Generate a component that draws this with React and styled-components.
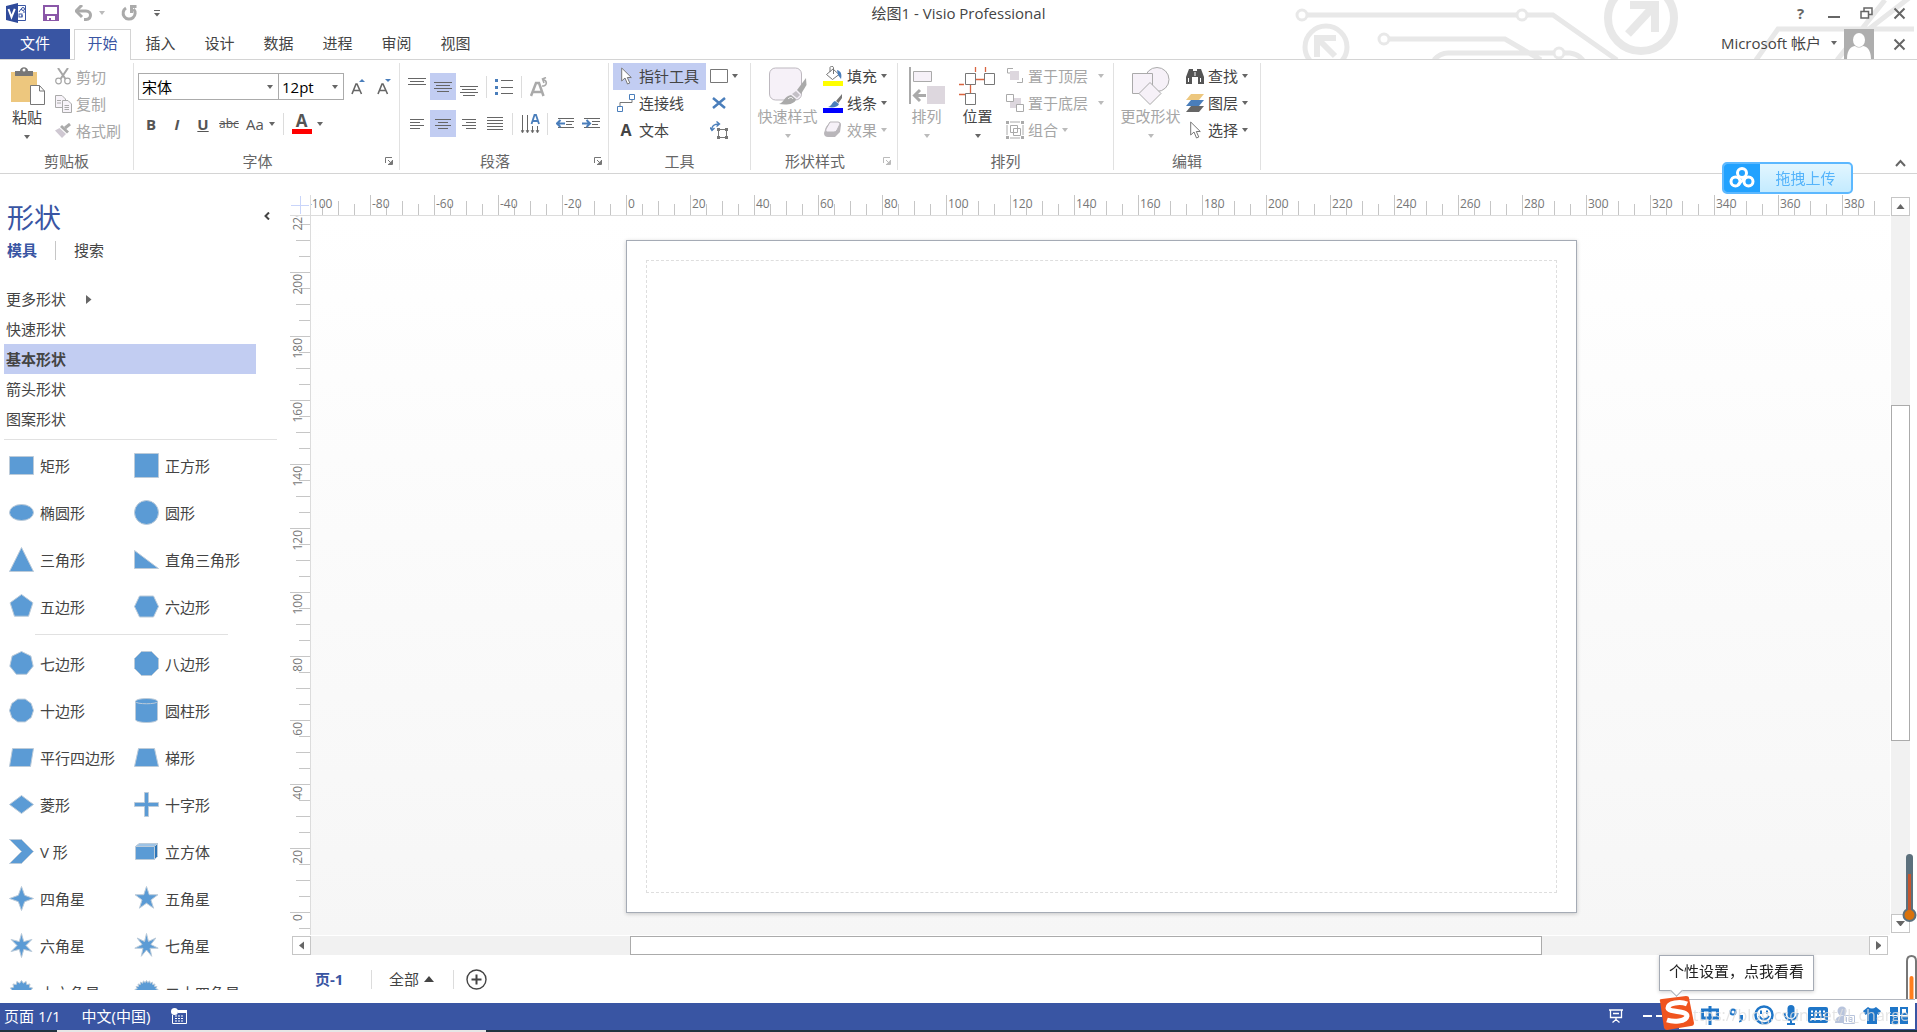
import React from 'react';
import styled, { createGlobalStyle } from 'styled-components';

const GlobalStyle = createGlobalStyle`
  * {
    box-sizing: border-box;
  }
  body {
    margin: 0;
    background: #fff;
    overflow: hidden;
  }
  body, button, select {
    font-family: "Open Sans", "Noto Sans CJK SC", sans-serif;
    font-size: 15px;
    line-height: 20px;
    color: #444;
  }
  button {
    border: none;
    background: none;
    padding: 0;
    white-space: nowrap;
  }
  svg {
    display: block;
    flex: none;
  }
`;

const Window = styled.div`
  display: flex;
  flex-direction: column;
  height: 100vh;
  overflow: hidden;
`;

/* ---------- title bar + tabs ---------- */

const Header = styled.header`
  position: relative;
  border-bottom: 1px solid #d4d4d4;
`;

const Circuit = styled.svg`
  position: absolute;
  right: 0;
  top: 0;
`;

const TitleBar = styled.div`
  position: relative;
  display: grid;
  grid-template-columns: 1fr auto 1fr;
  align-items: center;
  height: 29px;
  padding-bottom: 3px;
`;

const QuickAccess = styled.div`
  display: flex;
  align-items: center;
  gap: 16px;
  padding-left: 6px;
`;

const QuickButton = styled.button`
  display: flex;
  align-items: center;
  gap: 6px;
`;

const Title = styled.span`
  font-size: 15px;
`;

const WindowButtons = styled.div`
  display: flex;
  justify-content: flex-end;
  padding-right: 1px;
`;

const WindowButton = styled.button`
  display: flex;
  align-items: center;
  justify-content: center;
  width: 33px;
  height: 26px;
  font-weight: bold;
  color: #666;
`;

const TabRow = styled.div`
  position: relative;
  display: flex;
  height: 30px;
`;

const FileTab = styled.button`
  width: 70px;
  margin-right: 4px;
  padding-bottom: 2px;
  background: #3955a3;
  color: #fff;
`;

const Tab = styled.button`
  width: ${(p) => (p.$active ? 57 : 59)}px;
  height: ${(p) => (p.$active ? 31 : 30)}px;
  padding-bottom: ${(p) => (p.$active ? 4 : 2)}px;
  color: ${(p) => (p.$active ? '#3955a3' : '#444')};
  background: ${(p) => (p.$active ? '#fff' : 'none')};
  border: ${(p) => (p.$active ? '1px solid #d4d4d4' : 'none')};
  border-bottom: none;
`;

const Account = styled.div`
  display: flex;
  align-items: center;
  margin-left: auto;
  padding-right: 1px;
`;

const AccountName = styled.button`
  display: flex;
  align-items: center;
  gap: 10px;
  margin-right: 7px;
  padding-bottom: 2px;
`;

const AvatarButton = styled.button`
  margin-right: 9px;
`;

/* ---------- ribbon ---------- */

const Ribbon = styled.div`
  display: flex;
  height: 114px;
  padding: 3px 0;
  border-bottom: 1px solid #d4d4d4;
`;

const GroupBox = styled.section`
  display: flex;
  flex-direction: column;
  flex: none;
  width: ${(p) => p.$w}px;
  border-right: 1px solid #e1e1e1;
`;

const GroupBody = styled.div`
  display: flex;
  flex: 1;
  padding-left: ${(p) => p.$pad || 0}px;
`;

const GroupFooter = styled.div`
  display: flex;
  align-items: center;
  height: 18px;
  color: #666;

  span {
    flex: 1;
    text-align: center;
  }
  button {
    width: 18px;
    padding-left: 4px;
  }
`;

const Column = styled.div`
  display: flex;
  flex-direction: column;
  flex: none;
  padding-top: ${(p) => p.$top || 0}px;
`;

const Row = styled.div`
  display: flex;
  align-items: center;
  height: 37px;
`;

const BigButton = styled.button`
  display: flex;
  flex-direction: column;
  align-items: center;
  width: ${(p) => p.$w}px;
  padding-top: 4px;
  color: ${(p) => (p.disabled ? '#a6a6a6' : '#444')};

  span {
    line-height: 23px;
    margin-bottom: 6px;
  }
`;

const SmallButton = styled.button`
  display: flex;
  align-items: center;
  height: 27px;
  gap: 4px;
  padding: 0 ${(p) => p.$pad || 0}px 2px;
  color: ${(p) => (p.disabled ? '#a6a6a6' : '#444')};
  background: ${(p) => (p.$active ? '#c2cdf2' : 'none')};

  .slot {
    display: flex;
    justify-content: center;
    width: 18px;
  }
  .wide {
    margin-left: 6px;
  }
`;

const PointerTool = styled(SmallButton)`
  width: 93px;
`;

const ToolButton = styled.button`
  display: flex;
  align-items: center;
  justify-content: center;
  gap: 5px;
  width: ${(p) => p.$w || 26}px;
  height: 27px;
  background: ${(p) => (p.$active ? '#c2cdf2' : 'none')};
  color: #555;
`;

const Divider = styled.i`
  width: 1px;
  height: 22px;
  margin: 0 4px;
  background: #dcdcdc;
`;

const Combo = styled.label`
  display: flex;
  align-items: center;
  width: ${(p) => p.$w}px;
  height: 27px;
  margin-right: -1px;
  padding-right: 5px;
  border: 1px solid #ababab;

  & + button {
    margin-left: 2px;
  }
  select {
    flex: 1;
    min-width: 0;
    appearance: none;
    border: none;
    background: none;
    padding: 0 0 0 3px;
    color: #000;
  }
`;

const Letter = styled.span`
  font-weight: ${(p) => (p.$bold ? 'bold' : 'normal')};
  font-style: ${(p) => (p.$italic ? 'italic' : 'normal')};
  text-decoration: ${(p) => p.$line || 'none'};
  font-size: ${(p) => p.$size || 15}px;
`;

const FontColor = styled.span`
  display: flex;
  justify-content: center;
  width: 20px;
  border-bottom: 5px solid #f00;
  font-size: 17px;
  font-weight: bold;
  line-height: 16px;
`;

const CollapseRibbon = styled.button`
  align-self: flex-end;
  margin-left: auto;
  padding-right: 11px;
  padding-bottom: 3px;
`;

/* ---------- shapes panel ---------- */

const Main = styled.main`
  display: flex;
  flex: 1;
  min-height: 0;
`;

const Sidebar = styled.aside`
  display: flex;
  flex-direction: column;
  flex: none;
  width: 284px;
  padding-left: 4px;
  margin-bottom: 13px;
  overflow: hidden;
`;

const SidebarHead = styled.div`
  display: flex;
  flex: none;
  justify-content: space-between;
  align-items: center;
  height: 36px;
  margin-top: 26px;
  padding-right: 14px;

  h1 {
    margin: 0 0 0 3px;
    font-size: 27px;
    font-weight: normal;
    line-height: 36px;
    color: #3955a3;
  }
  button {
    margin-bottom: 4px;
  }
`;

const SidebarTabs = styled.div`
  display: flex;
  flex: none;
  align-items: center;
  height: 28px;
  padding-left: 3px;

  button:first-child {
    font-weight: bold;
    color: #3955a3;
  }
  i {
    width: 1px;
    height: 19px;
    margin: 0 18px;
    background: #c6c6c6;
  }
`;

const StencilList = styled.nav`
  display: flex;
  flex-direction: column;
  flex: none;
  margin-top: 20px;
  margin-right: 7px;
  padding-bottom: 5px;
  border-bottom: 1px solid #e1e1e1;
`;

const Stencil = styled.button`
  display: flex;
  align-items: center;
  gap: 20px;
  width: 252px;
  height: 30px;
  padding-left: 2px;
  font-weight: ${(p) => (p.$active ? 'bold' : 'normal')};
  background: ${(p) => (p.$active ? '#c2cdf2' : 'none')};
`;

const ShapeGrid = styled.div`
  display: grid;
  grid-template-columns: 125px 1fr;
  grid-auto-rows: 47px;
  flex: none;
  padding-left: 5px;

  nav + & {
    margin-top: 2px;
  }
`;

const ShapeItem = styled.button`
  display: flex;
  align-items: center;
  gap: 6px;
`;

const ShapeRule = styled.hr`
  flex: none;
  width: 193px;
  height: 1px;
  margin: 4px 0 5px 31px;
  border: none;
  background: #e1e1e1;
`;

/* ---------- drawing area ---------- */

const WorkArea = styled.div`
  display: grid;
  grid-template-columns: 27px minmax(0, 1fr) 27px;
  grid-template-rows: 21px minmax(0, 1fr) 20px 48px;
  flex: 1;
  min-width: 0;
  padding-top: 21px;
`;

const Corner = styled.div`
  display: flex;
  justify-content: flex-end;
  margin-left: 6px;
  border-right: 1px solid #dcdcdc;
  border-bottom: 1px solid #dcdcdc;
`;

const RulerH = styled.div`
  display: flex;
  overflow: hidden;
  border-bottom: 1px solid #dcdcdc;
`;

const RulerV = styled.div`
  display: flex;
  flex-direction: column;
  overflow: hidden;
  border-right: 1px solid #dcdcdc;
`;

const CellH = styled.div`
  position: relative;
  display: flex;
  align-items: flex-end;
  flex: none;
  width: 64px;

  &:first-child {
    margin-left: -5px;
  }
  i {
    width: 16px;
    height: 11px;
    border-left: 1px solid #c6c6c6;
  }
  i:nth-child(1) {
    height: 20px;
  }
  i:nth-child(3) {
    height: 14px;
  }
  span {
    position: absolute;
    left: 2px;
    top: 1px;
    font-size: 12px;
    line-height: 16px;
    color: #777;
  }
`;

const CellV = styled.div`
  position: relative;
  display: flex;
  flex-direction: column;
  align-items: flex-end;
  flex: none;
  height: 64px;

  &:first-child {
    margin-top: -8px;
  }
  i {
    height: 16px;
    width: 11px;
    border-top: 1px solid #c6c6c6;
  }
  i:nth-child(1) {
    width: 20px;
  }
  i:nth-child(3) {
    width: 14px;
  }
  span {
    position: absolute;
    left: 6px;
    top: 2px;
    writing-mode: vertical-rl;
    transform: rotate(180deg);
    font-size: 12px;
    line-height: 16px;
    color: #777;
  }
`;

const Canvas = styled.div`
  display: flex;
  align-items: center;
  justify-content: center;
  overflow: hidden;
  padding-top: 2px;
  padding-left: 1px;
  background: linear-gradient(#fff, #f6f6f6);
`;

const Sheet = styled.div`
  flex: none;
  width: 951px;
  height: 673px;
  padding: 19px;
  background: #fff;
  border: 1px solid #a5abb5;
  box-shadow: 0 1px 4px rgba(0, 0, 0, 0.2);

  div {
    height: 100%;
    border: 1px dashed #dedede;
  }
`;

const ScrollV = styled.div`
  grid-column: 3;
  grid-row: 1 / 3;
  display: flex;
  flex-direction: column;
  margin: 2px 7px 2px 1px;
  background: #f1f1f1;
`;

const ScrollH = styled.div`
  grid-column: 1 / 3;
  display: flex;
  margin: 1px 2px 0 8px;
  background: #f1f1f1;
`;

const ScrollButton = styled.button`
  display: flex;
  align-items: center;
  justify-content: center;
  flex: none;
  width: 19px;
  height: 19px;
  background: #fff;
  border: 1px solid #c6c6c6;
`;

const Gap = styled.div`
  flex: ${(p) => p.$n} 1 0;
`;

const Thumb = styled.div`
  flex: ${(p) => p.$n} 1 0;
  background: #fff;
  border: 1px solid #ababab;
`;

const PageTabs = styled.div`
  grid-column: 1 / 4;
  display: flex;
  align-items: center;
  padding-left: 31px;

  i {
    width: 1px;
    height: 19px;
    background: #dcdcdc;
  }
`;

const PageTab = styled.button`
  width: 56px;
  text-align: left;
  font-weight: bold;
  color: #3955a3;
`;

const AllPages = styled.button`
  display: flex;
  align-items: center;
  gap: 5px;
  padding: 0 19px 0 17px;
`;

const AddPage = styled.button`
  margin-left: 12px;
`;

/* ---------- bottom ---------- */

const StatusBar = styled.footer`
  display: flex;
  align-items: center;
  flex: none;
  height: 27px;
  padding: 0 255px 2px 4px;
  gap: 21px;
  background: #3955a3;
  color: #fff;
`;

const StatusRight = styled.div`
  display: flex;
  align-items: center;
  gap: 20px;
  margin-left: auto;
`;

const Taskbar = styled.div`
  display: flex;
  flex: none;
  height: 2px;
  background: #20333f;

  div {
    width: 429px;
    margin-left: 57px;
    background: #e6e6e6;
  }
`;

/* ---------- floating desktop widgets ---------- */

const UploadButton = styled.button`
  position: fixed;
  right: 64px;
  top: 162px;
  display: flex;
  width: 131px;
  height: 32px;
  border: 2px solid #5cb8ff;
  border-radius: 5px;
  overflow: hidden;
  background: linear-gradient(#e2f6ff, #c4ebff);
  color: #55b4fb;

  .mark {
    display: flex;
    align-items: center;
    justify-content: center;
    width: 36px;
    height: 28px;
    background: #22a2ff;
  }
  .text {
    flex: 1;
    line-height: 28px;
  }
`;

const Thermometers = styled.svg`
  position: fixed;
  right: 0;
  bottom: 33px;
`;

const Tip = styled.div`
  position: fixed;
  right: 103px;
  bottom: 41px;
  width: 155px;
  height: 36px;
  border: 1px solid #a5abb5;
  background: #fff;
  box-shadow: 0 1px 4px rgba(0, 0, 0, 0.2);
  text-align: center;
  line-height: 31px;
  color: #222;

  &::after {
    content: '';
    position: absolute;
    left: 12px;
    bottom: -5px;
    width: 8px;
    height: 8px;
    background: #fff;
    border: solid #a5abb5;
    border-width: 0 1px 1px 0;
    transform: rotate(45deg);
  }
`;

const ImeBar = styled.div`
  position: fixed;
  right: 2px;
  bottom: 3px;
  display: flex;
  align-items: center;
  gap: 7px;
  width: 236px;
  height: 30px;
  padding-left: 21px;
  background: #fff;
  border-top: 1px solid #b4b8c0;

  button {
    display: flex;
    align-items: center;
    justify-content: center;
    width: 20px;
    height: 28px;
  }
`;

const SogouLogo = styled.svg`
  position: fixed;
  right: 222px;
  bottom: 2px;
`;

const Watermark = styled.span`
  position: fixed;
  right: 8px;
  bottom: 5px;
  font-size: 16px;
  line-height: 24px;
  color: rgba(222, 222, 222, 0.8);
`;

/* ---------- icons ---------- */

const Caret = ({ color = '#666', dir = 'down', size = 6 }) => {
  const h = size / 2 + 1;
  const d = {
    down: `M0 0H${size}L${size / 2} ${h}Z`,
    up: `M0 ${h}H${size}L${size / 2} 0Z`,
    left: `M${h} 0V${size}L0 ${size / 2}Z`,
    right: `M0 0V${size}L${h} ${size / 2}Z`,
  }[dir];
  const flat = dir === 'down' || dir === 'up';
  return (
    <svg width={flat ? size : h} height={flat ? h : size}>
      <path d={d} fill={color} />
    </svg>
  );
};

const Svg = ({ w, h = w, children, ...rest }) => (
  <svg width={w} height={h} viewBox={`0 0 ${w} ${h}`} fill="none" {...rest}>
    {children}
  </svg>
);

const Cross = () => (
  <Svg w={13}>
    <path d="M1.5 1.5L11.5 11.5M11.5 1.5L1.5 11.5" stroke="#666" strokeWidth="2" />
  </Svg>
);

const VisioIcon = () => (
  <Svg w={21} h={20}>
    <path d="M12 2.5H19.5V17.5H12" fill="#fff" stroke="#3955a3" />
    <path d="M13 9L15 6H16M18 8V10M15 13H17" stroke="#3955a3" />
    <circle cx="17" cy="6" r="1.5" stroke="#3955a3" />
    <rect x="13" y="11" width="3" height="3" stroke="#3955a3" />
    <path d="M0 3L12 0V20L0 17Z" fill="#2f4b9b" />
    <path d="M2.5 6L5.5 14L8.8 5.8" stroke="#fff" strokeWidth="2" />
  </Svg>
);

const SaveIcon = () => (
  <Svg w={16}>
    <path d="M0 0H16V16H0Z" fill="#8a57a8" />
    <path d="M2 2H14V9H2ZM4 11H12V15H8V13H6V15H4Z" fill="#fff" />
  </Svg>
);

const UndoIcon = () => (
  <Svg w={18} h={16}>
    <path d="M2 6H11C17 6 17 14 11 14.500H9" stroke="#aaa" strokeWidth="3" />
    <path d="M7 0L1 6L7 12" stroke="#aaa" strokeWidth="3" />
  </Svg>
);

const RedoIcon = () => (
  <Svg w={17} h={16}>
    <path d="M5 3A6 6 0 1 0 12.500 4" stroke="#aaa" strokeWidth="3" />
    <path d="M9 1.500H15.500M10.500 1V8" stroke="#aaa" strokeWidth="3" />
  </Svg>
);

const CustomizeIcon = () => (
  <Svg w={6} h={7}>
    <path d="M0 .5H6" stroke="#666" />
    <path d="M0 3H6L3 6.500Z" fill="#666" />
  </Svg>
);

const PasteIcon = () => (
  <Svg w={35} h={39}>
    <path d="M1 5H27V35H1Z" fill="#edc77e" />
    <path d="M5 4H10C10 -1 18 -1 18 4H23V9H5Z" fill="#777" />
    <circle cx="14" cy="3" r="1.500" fill="#fff" />
    <path d="M20.500 18.500H29.500L34.500 24V37.500H20.500Z" fill="#fff" stroke="#777" />
    <path d="M29.500 18.500V24H34.500" stroke="#777" />
  </Svg>
);

const CutIcon = () => (
  <Svg w={16} h={17}>
    <path d="M3 0L10.500 11M13 0L5.500 11" stroke="#a6a6a6" strokeWidth="2" />
    <circle cx="3.500" cy="13" r="2.800" stroke="#a6a6a6" strokeWidth="1.200" />
    <circle cx="12.500" cy="13" r="2.800" stroke="#a6a6a6" strokeWidth="1.200" />
  </Svg>
);

const CopyIcon = () => (
  <Svg w={17} h={18}>
    <path d="M.5 .5H7L10.500 4V12.500H.5Z" fill="#f7f3f9" stroke="#aaa" />
    <path d="M2 5.500H6M2 8H6" stroke="#aaa" />
    <path d="M7.500 5.500H13L16.500 9V17.500H7.500Z" fill="#f7f3f9" stroke="#aaa" />
    <path d="M9.500 10.500H14M9.500 12.500H14M9.500 14.500H14" stroke="#aaa" />
  </Svg>
);

const BrushIcon = () => (
  <Svg w={17} h={16}>
    <path d="M15 1L10 5" stroke="#aaa" strokeWidth="3" />
    <path d="M7 2L14 8.500L12 10.500L5 4Z" fill="#aaa" />
    <path d="M4.500 5L11 11L7 15L0 7.500Z" fill="#cfc8d2" />
  </Svg>
);

const LauncherIcon = ({ color = '#777' }) => (
  <Svg w={8}>
    <path d="M.5 6V.5H7M3 3L6 6M7.500 3V7.500H3" stroke={color} />
    <path d="M7 3.500V7H3.500Z" fill={color} />
  </Svg>
);

// horizontal strokes: list of [x1, x2, y]
const Lines = ({ w = 18, h = 14, rows }) => (
  <Svg w={w} h={h}>
    {rows.map(([a, b, y], i) => (
      <path key={i} d={`M${a} ${y + 0.5}H${b}`} stroke="#666" />
    ))}
  </Svg>
);

const BulletsIcon = () => (
  <Svg w={18} h={16}>
    <path d="M6 1.500H18M6 8.500H18M6 14.500H18" stroke="#666" />
    <path d="M0 0H3V3H0ZM0 7H3V10H0ZM0 13H3V16H0Z" fill="#4a7ebb" />
  </Svg>
);

const RotateTextIcon = () => (
  <Svg w={18} h={20}>
    <path d="M1 19L6 6H9L13.500 19M3 15H12" stroke="#aaa" strokeWidth="2.500" />
    <path d="M12 9C17 9 18 4 13 2.500M16 .5L12.500 2L14 6" stroke="#aaa" strokeWidth="1.600" />
  </Svg>
);

const TextDirIcon = () => (
  <Svg w={19} h={20}>
    <path d="M1.500 1V18M6.500 1V18M11.500 12V18M16.500 12V18" stroke="#666" />
    <path d="M0 16.500H3L1.500 19ZM5 16.500H8L6.500 19ZM10 16.500H13L11.500 19ZM15 16.500H18L16.500 19Z" fill="#666" stroke="#666" strokeWidth=".5" />
    <path d="M10.500 10L13.500 1H15L18 10M11.500 7H17" stroke="#4a7ebb" strokeWidth="1.800" />
  </Svg>
);

const IndentIcon = ({ out }) => (
  <Svg w={18} h={12}>
    <path d="M2 .5H18M10 3.500H18M10 6.500H16M2 9.500H18" stroke="#666" />
    {out ? (
      <path d="M9 5.500H2M4.500 2L1 5.500L4.500 9" stroke="#4a7ebb" strokeWidth="2" />
    ) : (
      <path d="M0 5.500H7M4.500 2L8 5.500L4.500 9" stroke="#4a7ebb" strokeWidth="2" />
    )}
  </Svg>
);

const PointerIcon = () => (
  <Svg w={11} h={18}>
    <path d="M.7 1V14L4 11L6.500 17L8.800 16L6.300 10.500H10.300Z" fill="#fff" stroke="#777" />
  </Svg>
);

const ConnectorIcon = () => (
  <Svg w={18}>
    <path d="M3 12V8.500H15V6" stroke="#777" />
    <path d="M12.500 .5H17.500V5.500H12.500ZM.5 12.500H5.500V17.500H.5Z" stroke="#4a7ebb" />
  </Svg>
);

const RectIcon = () => (
  <Svg w={18} h={14}>
    <path d="M.5 .5H17.500V13.500H.5Z" stroke="#777" />
  </Svg>
);

const DeleteIcon = () => (
  <Svg w={18} h={12}>
    <path d="M3 1L15 11M15 1L3 11" stroke="#4a7ebb" strokeWidth="2.500" />
  </Svg>
);

const TextBlockIcon = () => (
  <Svg w={19} h={18}>
    <path d="M8.500 8.500H16.500V16.500H8.500Z" stroke="#777" />
    <path d="M7 7H10V10H7ZM15 7H18V10H15ZM7 15H10V18H7ZM15 15H18V18H15Z" fill="#777" />
    <path d="M1.800 9C1.500 5 4 3 9 3M0 6.500L2 9.500L4.500 7M6.500 .5L9.500 3L6.500 5.500" stroke="#4a7ebb" strokeWidth="1.400" />
  </Svg>
);

const QuickStyleIcon = () => (
  <Svg w={38} h={38}>
    <rect x=".5" y="1" width="32" height="32" rx="6" fill="#f6f1f8" stroke="#bdb8bf" />
    <path d="M37 11L28 23L32 27L37.500 18Z" fill="#aaa" />
    <path d="M27 24L31 28L28 31L23 27Z" fill="#c4c0c6" />
    <path d="M22 28L27 32C26 38 16 38 10 37C15 36 15 29 22 28Z" fill="#aaa" />
    <path d="M19 32C21 30 23 30 24 32" stroke="#fff" />
  </Svg>
);

const FillIcon = () => (
  <Svg w={20}>
    <path d="M3.500 8.500L10 3L16 8.500L9.500 13.500Z" fill="#fff" stroke="#777" />
    <path d="M7 6V1.500C7 0 10.500 0 10.500 1.500V8" stroke="#777" />
    <path d="M14 4C18 5 19 8 18 13L15 9Z" fill="#4a7ebb" />
    <path d="M0 15H20V20H0Z" fill="#ff0" />
  </Svg>
);

const LineIcon = () => (
  <Svg w={20}>
    <path d="M19 1L13 8L15.500 10L19 5Z" fill="#777" />
    <path d="M12 8L16 11C15 14 10 15 5 14C9 13 9 9 12 8Z" fill="#4a7ebb" />
    <path d="M0 15H20V20H0Z" fill="#00f" />
  </Svg>
);

const EffectIcon = () => (
  <Svg w={20} h={18}>
    <path d="M7 1H15Q18 1 18 4L17 11L12 16H5Q1 16 1 12L3 6Z" fill="#b9b6ba" />
    <path d="M7 1H15Q17 1 17 3L14 9Q13 11 11 11H4Q2 11 3 8Z" fill="#f6f1f8" stroke="#b9b6ba" />
  </Svg>
);

const AlignIcon = () => (
  <Svg w={36} h={38}>
    <path d="M1 0V37" stroke="#aaa" strokeWidth="2" />
    <path d="M4.500 4.500H22.500V14.500H4.500Z" fill="#f6f1f8" stroke="#aaa" />
    <path d="M18 19H36V37H18Z" fill="#ddd7de" />
    <path d="M17 28.500H6M11 23L5.500 28.500L11 34" stroke="#aaa" strokeWidth="3" />
  </Svg>
);

const PositionIcon = () => (
  <Svg w={37} h={38}>
    <path d="M16.500 0V5M26.500 0V5M16 12.500H27M0 17.500H5M11.500 16V27M0 27.500H7" stroke="#d9643f" strokeWidth="1.300" />
    <path d="M6.500 6.500H16.500V17.500H6.500ZM25.500 6.500H35.500V17.500H25.500ZM6.500 26.500H16.500V37.500H6.500Z" fill="#fff" stroke="#777" />
  </Svg>
);

const FrontIcon = () => (
  <Svg w={16}>
    <path d="M.5 5V.5H6M15.500 10V14.500H10M.5 5H3" stroke="#aaa" />
    <path d="M3 3H12V12H3Z" fill="#ddd7de" />
  </Svg>
);

const BackIcon = () => (
  <Svg w={18}>
    <path d="M4 4H15V14H4Z" fill="#ddd7de" />
    <path d="M.5 .5H7.500V7.500H.5ZM10.500 10.500H17.500V17.500H10.500Z" fill="#fff" stroke="#aaa" />
  </Svg>
);

const GroupIcon = () => (
  <Svg w={18}>
    <path d="M1 4V14M17 4V14M4 1H14M4 17H14M4.500 4.500H11.500V11.500H4.500ZM7.500 7.500H14.500V14.500H7.500Z" stroke="#aaa" />
    <path d="M0 0H3V3H0ZM15 0H18V3H15ZM0 15H3V18H0ZM15 15H18V18H15Z" fill="#aaa" />
  </Svg>
);

const ChangeShapeIcon = () => (
  <Svg w={38}>
    <circle cx="25" cy="12.5" r="12" fill="#f6f1f8" stroke="#aaa" />
    <path d="M.5 6.500H20.500V26.500H.5Z" fill="#f6f1f8" stroke="#aaa" />
    <path d="M18 15.500L29 26.500L18 37.500L7 26.500Z" fill="#f6f1f8" stroke="#aaa" />
  </Svg>
);

const FindIcon = () => (
  <Svg w={18} h={16}>
    <path d="M3 1H7V3H11V1H15L18 9V16H12V9H6V16H0V9Z" fill="#555" />
    <path d="M2.500 10V14M14.500 10V14M9 4V8" stroke="#fff" />
  </Svg>
);

const LayersIcon = () => (
  <Svg w={18}>
    <path d="M5 12H18L13 18H0Z" fill="#666" />
    <path d="M5 6H18L13 12H0Z" fill="#4a7ebb" />
    <path d="M5 0H18L13 6H0Z" fill="#edc77e" />
  </Svg>
);

const Avatar = () => (
  <Svg w={30}>
    <path d="M0 0H30V30H0Z" fill="#aeaeae" />
    <ellipse cx="15" cy="11" rx="6" ry="7" fill="#fff" />
    <path d="M3 30C3 20 8 17 11 17Q15 20 19 17C22 17 27 20 27 30Z" fill="#fff" />
  </Svg>
);

/* ---------- shape stencils ---------- */

const ring = (n, radius, start = -90) =>
  Array.from({ length: n }, (_, i) => {
    const a = ((start + (i * 360) / n) * Math.PI) / 180;
    return [12 + radius * Math.cos(a), 12 + radius * Math.sin(a)];
  });

const poly = (n, start) => ring(n, 12, start).map((p) => p.join()).join(' ');

const star = (n, inner) => {
  const a = ring(n, 12);
  const b = ring(n, inner, -90 + 180 / n);
  return a.map((p, i) => `${p.join()} ${b[i].join()}`).join(' ');
};

const mainShapes = [
  ['矩形', <path d="M0 3H24V21H0Z" />],
  ['正方形', <path d="M0 0H24V24H0Z" />],
  ['椭圆形', <ellipse cx="12" cy="12" rx="12" ry="8" />],
  ['圆形', <circle cx="12" cy="12" r="12" />],
  ['三角形', <path d="M12 0L24 24H0Z" />],
  ['直角三角形', <path d="M0 3L24 21H0Z" />],
  ['五边形', <polygon points={poly(5)} />],
  ['六边形', <path d="M5 1.500H19L24 12L19 22.500H5L0 12Z" />],
];

const moreShapes = [
  ['七边形', <polygon points={poly(7)} />],
  ['八边形', <path d="M7 0H17L24 7V17L17 24H7L0 17V7Z" />],
  ['十边形', <polygon points={poly(10, 0)} />],
  [
    '圆柱形',
    <g>
      <path d="M1 3V21C1 25 23 25 23 21V3C23 -1 1 -1 1 3Z" />
      <path d="M1 3C1 6 23 6 23 3" />
    </g>,
  ],
  ['平行四边形', <path d="M3 3H24L21 21H0Z" />],
  ['梯形', <path d="M4 3H20L24 21H0Z" />],
  ['菱形', <path d="M12 3L24 12L12 21L0 12Z" />],
  ['十字形', <path d="M10 0H14V10H24V14H14V24H10V14H0V10H10Z" />],
  ['V 形', <path d="M0 0H12L24 12L12 24H0L12 12Z" />],
  [
    '立方体',
    <g>
      <path d="M1 7L5 4H23V17L20 20H1Z" />
      <path d="M1 7L5 4H23L20 7Z" fill="#9dc3e6" />
      <path d="M20 7L23 4V17L20 20Z" fill="#2e75b6" />
    </g>,
  ],
  ['四角星', <polygon points={star(4, 4.5)} />],
  ['五角星', <polygon points={star(5, 4.7)} />],
  ['六角星', <polygon points={star(6, 4.5)} />],
  ['七角星', <polygon points={star(7, 4.5)} />],
  ['十六角星', <polygon points={star(16, 9.5)} />],
  ['二十四角星', <polygon points={star(24, 10)} />],
];

const Shapes = ({ items }) => (
  <ShapeGrid>
    {items.map(([name, shape]) => (
      <ShapeItem key={name}>
        <svg width="25" height="25" viewBox="-.5 -.5 25 25" fill="#5b9bd5" stroke="#bccbd9">
          {shape}
        </svg>
        {name}
      </ShapeItem>
    ))}
  </ShapeGrid>
);

const Group = ({ name, w, pad, launcher, children }) => (
  <GroupBox $w={w}>
    <GroupBody $pad={pad}>{children}</GroupBody>
    <GroupFooter>
      <span>{name}</span>
      {launcher && (
        <button aria-label={name}>
          <LauncherIcon color={launcher} />
        </button>
      )}
    </GroupFooter>
  </GroupBox>
);

const hLabels = Array.from({ length: 25 }, (_, i) => -100 + i * 20);
const vLabels = Array.from({ length: 12 }, (_, i) => 220 - i * 20);

const Ticks = () => (
  <>
    <i />
    <i />
    <i />
    <i />
  </>
);

const CircuitArt = () => (
  <Circuit width="647" height="59" viewBox="0 0 647 59" fill="none" stroke="#e8e8e8" strokeWidth="5">
    <path d="M37 15H247M257 15H283L347 60M119 39H235L271 60M164 60Q170 53 178 53H283M294 53H300Q308 54 313 60" />
    <path d="M486 60L508 29H644M567 60L615 0M599 29L639 -2" />
    <circle cx="32" cy="15" r="5" strokeWidth="3" />
    <circle cx="252" cy="15" r="5" strokeWidth="3" />
    <circle cx="114" cy="39" r="5" strokeWidth="3" />
    <circle cx="289" cy="53" r="5" strokeWidth="3" />
    <circle cx="56" cy="47" r="21" />
    <path d="M47 57V38H66M48 39L65 56" strokeWidth="6" />
    <circle cx="371" cy="18" r="33" strokeWidth="8" />
    <path d="M360 5H385V32M384 6L358 34" strokeWidth="8" />
  </Circuit>
);

const ime = '#1f76c8';

export default function App() {
  return (
    <Window>
      <GlobalStyle />
      <Header>
        <CircuitArt />
        <TitleBar>
          <QuickAccess>
            <QuickButton aria-label="Visio"><VisioIcon /></QuickButton>
            <QuickButton aria-label="保存"><SaveIcon /></QuickButton>
            <QuickButton aria-label="撤消"><UndoIcon /><Caret color="#bbb" /></QuickButton>
            <QuickButton aria-label="恢复"><RedoIcon /></QuickButton>
            <QuickButton aria-label="自定义"><CustomizeIcon /></QuickButton>
          </QuickAccess>
          <Title>绘图1 - Visio Professional</Title>
          <WindowButtons>
            <WindowButton>?</WindowButton>
            <WindowButton aria-label="最小化">
              <Svg w={12}><path d="M0 10H12" stroke="#666" strokeWidth="2" /></Svg>
            </WindowButton>
            <WindowButton aria-label="还原">
              <Svg w={13} h={12}>
                <path d="M4 4V1H12V7.500H9" stroke="#666" strokeWidth="1.500" />
                <path d="M1 4.500H8.500V11H1Z" stroke="#666" strokeWidth="1.500" />
              </Svg>
            </WindowButton>
            <WindowButton aria-label="关闭"><Cross /></WindowButton>
          </WindowButtons>
        </TitleBar>
        <TabRow>
          <FileTab>文件</FileTab>
          <Tab $active>开始</Tab>
          {['插入', '设计', '数据', '进程', '审阅', '视图'].map((t) => (
            <Tab key={t}>{t}</Tab>
          ))}
          <Account>
            <AccountName>Microsoft 帐户 <Caret /></AccountName>
            <AvatarButton aria-label="帐户图片"><Avatar /></AvatarButton>
            <WindowButton aria-label="关闭文档"><Cross /></WindowButton>
          </Account>
        </TabRow>
      </Header>

      <Ribbon>
        <Group name="剪贴板" w={134}>
          <BigButton $w={54}><PasteIcon /><span>粘贴</span><Caret /></BigButton>
          <Column $top={1}>
            <SmallButton disabled><span className="slot"><CutIcon /></span>剪切</SmallButton>
            <SmallButton disabled><span className="slot"><CopyIcon /></span>复制</SmallButton>
            <SmallButton disabled><span className="slot"><BrushIcon /></span>格式刷</SmallButton>
          </Column>
        </Group>

        <Group name="字体" w={266} pad={4} launcher="#777">
          <Column $top={5}>
            <Row>
              <Combo $w={141}>
                <select aria-label="字体"><option>宋体</option></select>
                <Caret />
              </Combo>
              <Combo $w={66}>
                <select aria-label="字号"><option>12pt</option></select>
                <Caret />
              </Combo>
              <ToolButton aria-label="增大字号">
                <Svg w={14} h={16}>
                  <path d="M1 15L5 5H6L10.500 15M2.500 11.500H9" stroke="#666" strokeWidth="1.600" />
                  <path d="M8 3L11 0L14 3Z" fill="#4a7ebb" />
                </Svg>
              </ToolButton>
              <ToolButton aria-label="减小字号">
                <Svg w={14} h={16}>
                  <path d="M1 15L5 5H6L10.500 15M2.500 11.500H8.500" stroke="#666" strokeWidth="1.600" />
                  <path d="M8 0H14L11 3Z" fill="#4a7ebb" />
                </Svg>
              </ToolButton>
            </Row>
            <Row>
              <ToolButton><Letter $bold>B</Letter></ToolButton>
              <ToolButton><Letter $bold $italic>I</Letter></ToolButton>
              <ToolButton><Letter $bold $line="underline">U</Letter></ToolButton>
              <ToolButton><Letter $line="line-through" $size={12}>abc</Letter></ToolButton>
              <ToolButton $w={37}><Letter>Aa</Letter><Caret /></ToolButton>
              <Divider />
              <ToolButton $w={38}><FontColor>A</FontColor><Caret /></ToolButton>
            </Row>
          </Column>
        </Group>

        <Group name="段落" w={209} pad={4} launcher="#777">
          <Column $top={5}>
            <Row>
              <ToolButton aria-label="顶端对齐">
                <Lines h={18} rows={[[0, 18, 0], [2, 16, 3], [0, 18, 6]]} />
              </ToolButton>
              <ToolButton $active aria-label="中部对齐">
                <Lines h={12} rows={[[0, 18, 1], [2, 16, 4], [0, 18, 7], [3, 15, 10]]} />
              </ToolButton>
              <ToolButton aria-label="底端对齐">
                <Lines h={18} rows={[[0, 18, 8], [2, 16, 11], [0, 18, 14], [3, 15, 17]]} />
              </ToolButton>
              <Divider />
              <ToolButton aria-label="项目符号"><BulletsIcon /></ToolButton>
              <Divider />
              <ToolButton aria-label="旋转文本" disabled><RotateTextIcon /></ToolButton>
            </Row>
            <Row>
              <ToolButton aria-label="左对齐">
                <Lines w={14} h={12} rows={[[0, 14, 1], [0, 10, 4], [0, 14, 7], [0, 10, 10]]} />
              </ToolButton>
              <ToolButton $active aria-label="居中">
                <Lines w={16} h={12} rows={[[0, 16, 1], [3, 13, 4], [0, 16, 7], [3, 13, 10]]} />
              </ToolButton>
              <ToolButton aria-label="右对齐">
                <Lines w={14} h={12} rows={[[0, 14, 1], [4, 14, 4], [0, 14, 7], [4, 14, 10]]} />
              </ToolButton>
              <ToolButton aria-label="两端对齐">
                <Lines w={16} h={14} rows={[[0, 16, 0], [0, 16, 3], [0, 16, 6], [0, 16, 9], [0, 16, 12]]} />
              </ToolButton>
              <Divider />
              <ToolButton aria-label="文字方向"><TextDirIcon /></ToolButton>
              <Divider />
              <ToolButton aria-label="减少缩进"><IndentIcon out /></ToolButton>
              <ToolButton aria-label="增加缩进"><IndentIcon /></ToolButton>
            </Row>
          </Column>
        </Group>

        <Group name="工具" w={142} pad={4}>
          <Column>
            <PointerTool $active $pad={4}><span className="slot"><PointerIcon /></span>指针工具</PointerTool>
            <SmallButton $pad={4}><span className="slot"><ConnectorIcon /></span>连接线</SmallButton>
            <SmallButton $pad={4}>
              <span className="slot"><Letter $bold $size={16}>A</Letter></span>文本
            </SmallButton>
          </Column>
          <Column>
            <SmallButton $pad={4} aria-label="矩形"><RectIcon /><Caret /></SmallButton>
            <SmallButton $pad={4} aria-label="连接点"><DeleteIcon /></SmallButton>
            <SmallButton $pad={4} aria-label="文本块"><TextBlockIcon /></SmallButton>
          </Column>
        </Group>

        <Group name="形状样式" w={147} pad={1} launcher="#bbb">
          <BigButton $w={71} disabled><QuickStyleIcon /><span>快速样式</span><Caret color="#bbb" /></BigButton>
          <Column>
            <SmallButton><FillIcon />填充<Caret /></SmallButton>
            <SmallButton><LineIcon />线条<Caret /></SmallButton>
            <SmallButton disabled><EffectIcon />效果<Caret color="#bbb" /></SmallButton>
          </Column>
        </Group>

        <Group name="排列" w={216} pad={3}>
          <BigButton $w={51} disabled><AlignIcon /><span>排列</span><Caret color="#bbb" /></BigButton>
          <BigButton $w={51}><PositionIcon /><span>位置</span><Caret /></BigButton>
          <Column>
            <SmallButton disabled $pad={3}>
              <span className="slot"><FrontIcon /></span>置于顶层
              <span className="wide"><Caret color="#bbb" /></span>
            </SmallButton>
            <SmallButton disabled $pad={3}>
              <span className="slot"><BackIcon /></span>置于底层
              <span className="wide"><Caret color="#bbb" /></span>
            </SmallButton>
            <SmallButton disabled $pad={3}>
              <span className="slot"><GroupIcon /></span>组合<Caret color="#bbb" />
            </SmallButton>
          </Column>
        </Group>

        <Group name="编辑" w={147} pad={1}>
          <BigButton $w={71} disabled><ChangeShapeIcon /><span>更改形状</span><Caret color="#bbb" /></BigButton>
          <Column>
            <SmallButton><FindIcon />查找<Caret /></SmallButton>
            <SmallButton><LayersIcon />图层<Caret /></SmallButton>
            <SmallButton><span className="slot"><PointerIcon /></span>选择<Caret /></SmallButton>
          </Column>
        </Group>

        <CollapseRibbon aria-label="折叠功能区">
          <Svg w={11} h={8}><path d="M1 7L5.500 2L10 7" stroke="#666" strokeWidth="2" /></Svg>
        </CollapseRibbon>
      </Ribbon>

      <Main>
        <Sidebar>
          <SidebarHead>
            <h1>形状</h1>
            <button aria-label="最小化形状窗口">
              <Svg w={6} h={8}><path d="M5 .5L1.500 4L5 7.500" stroke="#444" strokeWidth="2" /></Svg>
            </button>
          </SidebarHead>
          <SidebarTabs>
            <button>模具</button>
            <i />
            <button>搜索</button>
          </SidebarTabs>
          <StencilList>
            <Stencil>更多形状 <Caret dir="right" size={9} /></Stencil>
            <Stencil>快速形状</Stencil>
            <Stencil $active>基本形状</Stencil>
            <Stencil>箭头形状</Stencil>
            <Stencil>图案形状</Stencil>
          </StencilList>
          <Shapes items={mainShapes} />
          <ShapeRule />
          <Shapes items={moreShapes} />
        </Sidebar>

        <WorkArea>
          <Corner>
            <Svg w={20}><path d="M10.500 1V19M1 10.500H19" stroke="#c9d5fa" /></Svg>
          </Corner>
          <RulerH>
            {hLabels.map((n) => (
              <CellH key={n}><Ticks /><span>{n}</span></CellH>
            ))}
          </RulerH>
          <ScrollV>
            <ScrollButton aria-label="向上"><Caret dir="up" size={9} /></ScrollButton>
            <Gap $n={190} />
            <Thumb $n={334} />
            <Gap $n={174} />
            <ScrollButton aria-label="向下"><Caret size={9} /></ScrollButton>
          </ScrollV>
          <RulerV>
            {vLabels.map((n) => (
              <CellV key={n}><Ticks /><span>{n}</span></CellV>
            ))}
          </RulerV>
          <Canvas>
            <Sheet><div /></Sheet>
          </Canvas>
          <ScrollH>
            <ScrollButton aria-label="向左"><Caret dir="left" size={9} /></ScrollButton>
            <Gap $n={319} />
            <Thumb $n={912} />
            <Gap $n={327} />
            <ScrollButton aria-label="向右"><Caret dir="right" size={9} /></ScrollButton>
          </ScrollH>
          <PageTabs>
            <PageTab>页-1</PageTab>
            <i />
            <AllPages>全部<Caret dir="up" size={10} color="#444" /></AllPages>
            <i />
            <AddPage aria-label="插入页">
              <Svg w={21}>
                <circle cx="10.500" cy="10.500" r="9.500" stroke="#444" strokeWidth="1.400" />
                <path d="M10.500 5.500V15.500M5.500 10.500H15.500" stroke="#444" strokeWidth="2" />
              </Svg>
            </AddPage>
          </PageTabs>
        </WorkArea>
      </Main>

      <StatusBar>
        <span>页面 1/1</span>
        <span>中文(中国)</span>
        <Svg w={16}>
          <path d="M6 2.500H15.500V15.500H1.500V7" stroke="#fff" />
          <path d="M7 2H16V5H7Z" fill="#fff" />
          <circle cx="3.500" cy="3.500" r="3.500" fill="#fff" />
          <path d="M4 8H13M4 10.500H13M4 13H13" stroke="#fff" strokeDasharray="2 1" />
        </Svg>
        <StatusRight>
          <Svg w={14}>
            <path d="M0 1H14M1.500 1V8.500H12.500V1M4 4.500H10M7 8V12M3.500 13.500L7 10.500L10.500 13.500" stroke="#fff" strokeWidth="1.300" />
          </Svg>
          <Svg w={19} h={2}><path d="M0 1H9M13 1H19" stroke="#fff" strokeWidth="2" /></Svg>
        </StatusRight>
      </StatusBar>
      <Taskbar><div /></Taskbar>

      <UploadButton>
        <span className="mark">
          <Svg w={26} h={22}>
            <circle cx="13" cy="6" r="4.500" stroke="#fff" strokeWidth="3" />
            <circle cx="6.500" cy="14.500" r="4.500" stroke="#fff" strokeWidth="3" />
            <circle cx="19.500" cy="14.500" r="4.500" stroke="#fff" strokeWidth="3" />
            <path d="M9 17.500L16 11" stroke="#fff" strokeWidth="3" />
          </Svg>
        </span>
        <span className="text">拖拽上传</span>
      </UploadButton>

      <Thermometers width="15" height="145" viewBox="0 0 15 145" fill="none">
        <rect x="4" y="0" width="7" height="62" rx="3.500" fill="#5c707c" />
        <circle cx="7.500" cy="61" r="7" fill="#5c707c" />
        <path d="M7.500 20V60" stroke="#c4552d" strokeWidth="3" />
        <circle cx="7.500" cy="61" r="5" fill="#d9720b" />
        <path d="M5 146V107Q5 102 9.500 102Q14 102 14 107V146" fill="#fff" stroke="#777" strokeWidth="2" />
        <path d="M9.500 124V146" stroke="#ff7f1e" strokeWidth="4" strokeLinecap="round" />
      </Thermometers>

      <ImeBar>
        <button aria-label="中文">
          <Svg w={18} h={20}><path d="M1.500 5H16.500V13H1.500ZM9 1V20" stroke={ime} strokeWidth="3" /></Svg>
        </button>
        <button aria-label="标点">
          <Svg w={16} h={16}>
            <circle cx="4" cy="5" r="2.500" stroke={ime} strokeWidth="2" />
            <path d="M10 8H14V11Q14 15 10 15.500V13.500L11.500 12H10Z" fill={ime} />
          </Svg>
        </button>
        <button aria-label="表情">
          <Svg w={20}>
            <circle cx="10" cy="10" r="8.500" stroke={ime} strokeWidth="2.500" />
            <path d="M7 5.500V9M13 5.500V9M5 11Q10 18 15 11" stroke={ime} strokeWidth="2" />
          </Svg>
        </button>
        <button aria-label="语音">
          <Svg w={16} h={20}>
            <rect x="4.500" y="0" width="7" height="13" rx="3.500" fill={ime} />
            <path d="M1.500 8Q2 15 8 15Q14 15 14.500 8M8 15V19M4 19H12" stroke={ime} strokeWidth="2" />
          </Svg>
        </button>
        <button aria-label="软键盘">
          <Svg w={20} h={16}>
            <rect width="20" height="16" rx="2" fill={ime} />
            <path d="M3 4.500H17M3 8H17" stroke="#fff" strokeWidth="2" strokeDasharray="2 2" />
            <path d="M3 12H17" stroke="#fff" strokeWidth="2" />
          </Svg>
        </button>
        <button aria-label="账户">
          <Svg w={20} h={18}>
            <circle cx="7" cy="5" r="4.500" fill="#b8c4dc" />
            <path d="M0 17Q0 10 7 10H12V17Z" fill="#b8c4dc" />
            <path d="M8.500 9.500H19.500V17.500H8.500Z" fill="#fff" stroke="#b8c4dc" />
            <path d="M11.500 11V16M14 11.500H17V15.500H14ZM14 13.500H17" stroke="#b8c4dc" />
          </Svg>
        </button>
        <button aria-label="皮肤">
          <Svg w={18} h={18}>
            <path d="M5 1Q9 4 13 1L18 5L15.500 9L14 8V18H4V8L2.500 9L0 5Z" fill={ime} />
          </Svg>
        </button>
        <button aria-label="工具箱">
          <Svg w={18} h={18}>
            <path d="M0 1H8V9H0ZM0 10H8V18H0ZM10 10H18V18H10Z" fill={ime} />
            <path d="M11 2H17V8H11Z" stroke={ime} strokeWidth="2" />
          </Svg>
        </button>
      </ImeBar>
      <Watermark>https://blog.csdn.net/ll_charge</Watermark>
      <SogouLogo width="36" height="34" viewBox="0 0 36 34" fill="none">
        <path d="M1 5Q0 3 3 3L27 0Q30 0 30 2L35 27Q35 30 32 30L8 34Q6 34 5 32Z" fill="#f0541e" />
        <path d="M28 8C21 5 9 7 9 12C10 17 28 14 28 20C27 26 14 26 8 24" stroke="#fff" strokeWidth="5" />
      </SogouLogo>
      <Tip>个性设置，点我看看</Tip>
    </Window>
  );
}
